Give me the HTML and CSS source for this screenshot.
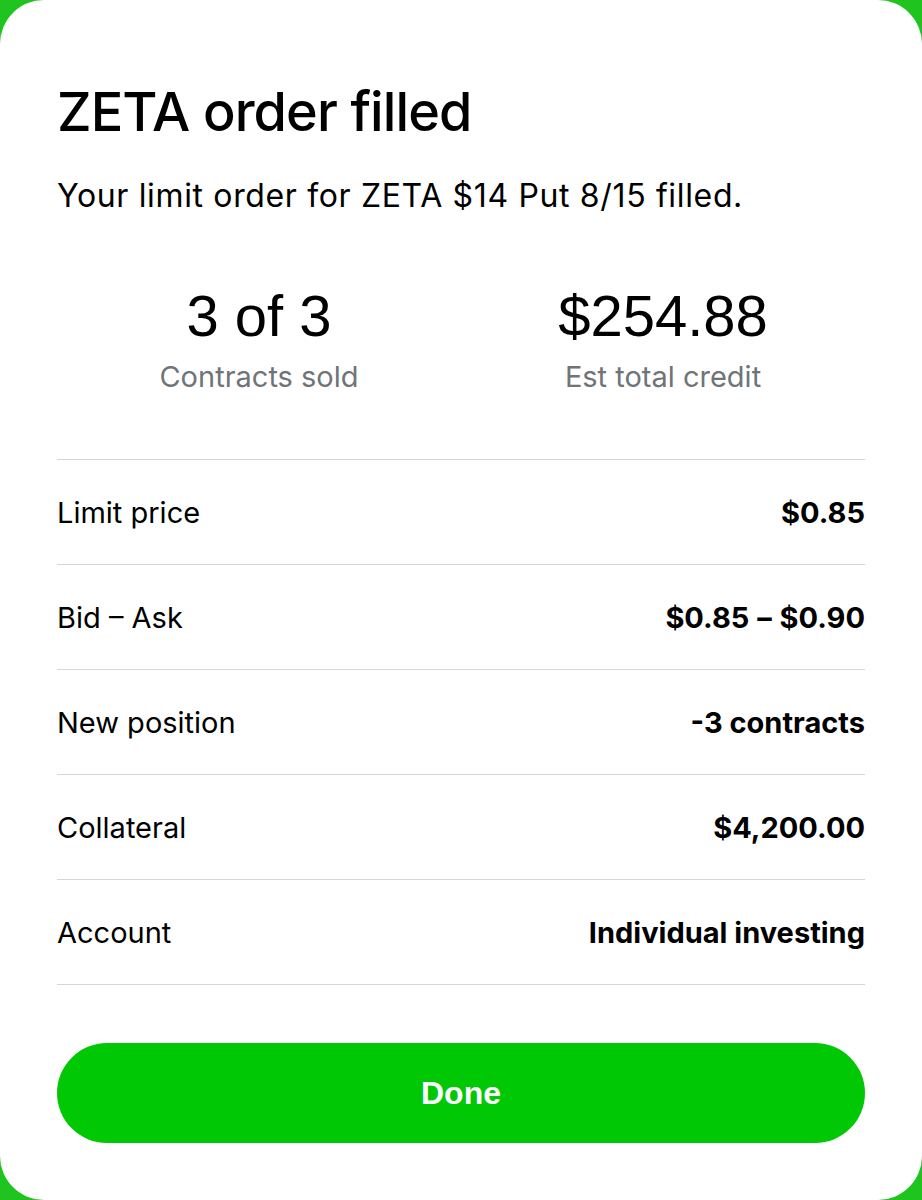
FILE: index.html
```html
<!DOCTYPE html>
<html>
<head>
<meta charset="utf-8">
<link rel="stylesheet" href="styles.css">
</head>
<body>
<div class="card">
  <h1 class="title">ZETA order filled</h1>
  <p class="subtitle">Your limit order for ZETA $14 Put 8/15 filled.</p>
  <div class="stats">
    <div class="stat">
      <div class="stat-value">3 of 3</div>
      <div class="stat-label">Contracts sold</div>
    </div>
    <div class="stat">
      <div class="stat-value">$254.88</div>
      <div class="stat-label">Est total credit</div>
    </div>
  </div>
  <div class="details">
    <div class="row"><span class="label">Limit price</span><span class="value">$0.85</span></div>
    <div class="row"><span class="label">Bid – Ask</span><span class="value">$0.85 <span class="dash">–</span> $0.90</span></div>
    <div class="row"><span class="label">New position</span><span class="value">-3 contracts</span></div>
    <div class="row"><span class="label">Collateral</span><span class="value">$4,200.00</span></div>
    <div class="row"><span class="label">Account</span><span class="value">Individual investing</span></div>
  </div>
  <button class="done">Done</button>
</div>
</body>
</html>
```

FILE: styles.css
```css
html, body {
  margin: 0;
  padding: 0;
  background: #1fc41f;
}
.card {
  box-sizing: border-box;
  width: 922px;
  height: 1200px;
  background: #ffffff;
  border-radius: 44px;
  padding: 78px 57px 0 57px;
  font-family: Inter, "Liberation Sans", sans-serif;
  color: #000;
}
.title {
  margin: 0;
  font-size: 54px;
  font-weight: 500;
  line-height: 68px;
  letter-spacing: -0.9px;
}
.subtitle {
  margin: 30px 0 0 0;
  font-size: 32px;
  line-height: 40px;
  font-weight: 400;
  letter-spacing: 0.65px;
}
.stats {
  display: grid;
  grid-template-columns: 1fr 1fr;
  margin-top: 67px;
}
.stat {
  display: flex;
  flex-direction: column;
  align-items: center;
}
.stat-value {
  font-family: "Liberation Sans", Arial, sans-serif;
  font-size: 58px;
  line-height: 66px;
}
.stat-label {
  margin-top: 10px;
  font-size: 29px;
  line-height: 36px;
  color: #6f7479;
}
.details {
  margin-top: 64px;
  border-top: 1.5px solid #d6d6d6;
}
.row {
  display: flex;
  justify-content: space-between;
  align-items: center;
  height: 104px;
  border-bottom: 1.5px solid #d6d6d6;
  font-size: 29px;
}
.value {
  font-weight: 700;
}
.dash {
  margin: 0 1px;
}
.done {
  display: block;
  width: 100%;
  height: 100px;
  margin-top: 58px;
  border: none;
  border-radius: 50px;
  background: #00c805;
  color: #fff;
  font-family: "Liberation Sans", Arial, sans-serif;
  font-weight: 700;
  font-size: 32px;
}
```
